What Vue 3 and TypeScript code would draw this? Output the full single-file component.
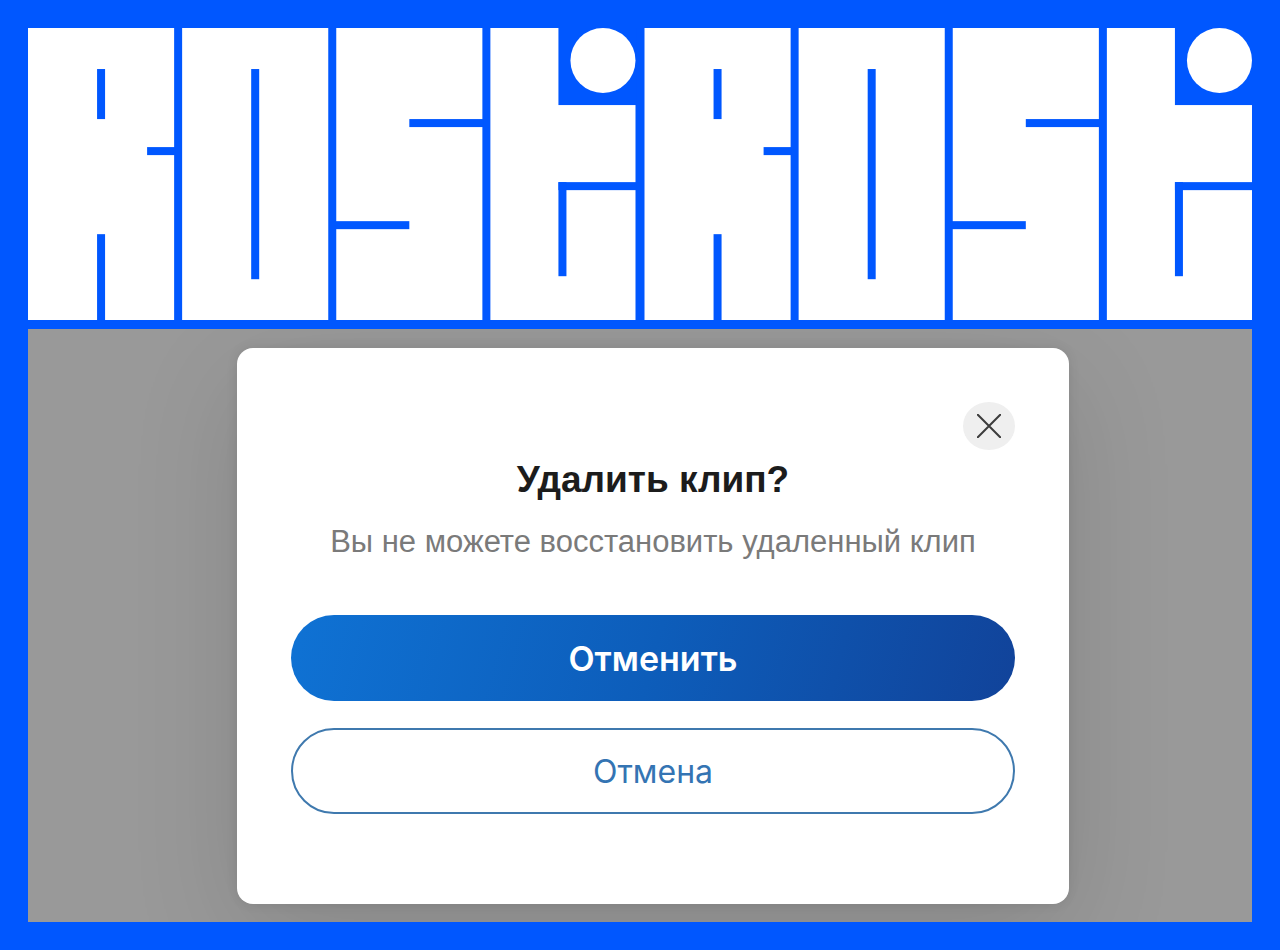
<script setup lang="ts">
import { ref } from 'vue'

interface Block {
  x: number
  y: number
  w: number
  h: number
}

const WORDMARK_STEP = 616

// White letter bodies and the blue slots cut into them
const bodies: Block[] = [
  { x: 0, y: 0, w: 146, h: 292 },
  { x: 154, y: 0, w: 146, h: 292 },
  { x: 308, y: 0, w: 146, h: 292 },
  { x: 462, y: 0, w: 145, h: 292 },
]
const slots: Block[] = [
  { x: 69, y: 41, w: 8, h: 50 },
  { x: 119, y: 119, w: 28, h: 8 },
  { x: 69, y: 206, w: 8, h: 87 },
  { x: 223, y: 41, w: 8, h: 210 },
  { x: 381, y: 91, w: 74, h: 8 },
  { x: 307, y: 193, w: 74, h: 8 },
  { x: 530, y: -1, w: 78, h: 78 },
  { x: 530, y: 154, w: 78, h: 8 },
  { x: 530, y: 154, w: 8, h: 94 },
]

const open = ref(true)
const close = () => {
  open.value = false
}
</script>

<template>
  <main class="page">
    <svg class="brand" viewBox="0 0 1223 292" role="img" aria-label="RostiRosti">
      <g v-for="n in 2" :key="n" :transform="`translate(${(n - 1) * WORDMARK_STEP} 0)`">
        <rect
          v-for="(b, i) in bodies"
          :key="`b${i}`"
          class="body"
          :x="b.x"
          :y="b.y"
          :width="b.w"
          :height="b.h"
        />
        <rect
          v-for="(s, i) in slots"
          :key="`s${i}`"
          class="slot"
          :x="s.x"
          :y="s.y"
          :width="s.w"
          :height="s.h"
        />
        <circle class="body" cx="574.5" cy="32.5" r="32.5" />
      </g>
    </svg>

    <section class="stage">
      <div v-if="open" class="dialog" role="dialog" aria-modal="true" aria-labelledby="dialog-title">
        <button class="close" type="button" aria-label="Закрыть" @click="close">
          <svg class="cross" viewBox="0 0 24 24" aria-hidden="true">
            <path d="M0.8 0.8 23.2 23.2M23.2 0.8 0.8 23.2" />
          </svg>
        </button>
        <h1 id="dialog-title" class="title">Удалить клип?</h1>
        <p class="message">Вы не можете восстановить удаленный клип</p>
        <div class="actions">
          <button class="action primary" type="button" @click="close">Отменить</button>
          <button class="action secondary" type="button" @click="close">Отмена</button>
        </div>
      </div>
    </section>
  </main>
</template>

<style>
body {
  margin: 0;
  background: #0057ff;
}
</style>

<style scoped>
.page {
  box-sizing: border-box;
  min-height: 100vh;
  padding: 28px;
  display: flex;
  flex-direction: column;
  gap: 9px;
  background: #0057ff;
  font-family: "Liberation Sans", Arial, sans-serif;
}

.brand {
  display: block;
  width: 100%;
}

.body {
  fill: #ffffff;
}

.slot {
  fill: #0057ff;
}

.stage {
  box-sizing: border-box;
  flex: 1;
  display: flex;
  justify-content: center;
  align-items: stretch;
  padding: 19px 0 18px 26px;
  background: #999999;
  overflow: hidden;
}

.dialog {
  box-sizing: border-box;
  width: 832px;
  max-width: 100%;
  padding: 54px 54px 90px;
  display: flex;
  flex-direction: column;
  border-radius: 16px;
  background: #ffffff;
  box-shadow: 0 32px 112px rgba(0, 0, 0, 0.12), 0 0 12px rgba(0, 0, 0, 0.09);
  text-align: center;
}

.close {
  align-self: flex-end;
  width: 52px;
  height: 48px;
  padding: 0;
  display: flex;
  align-items: center;
  justify-content: center;
  border: 0;
  border-radius: 50%;
  background: #efefef;
  cursor: pointer;
}

.cross {
  width: 24px;
  height: 24px;
  fill: none;
  stroke: #3c3c3c;
  stroke-width: 2;
  stroke-linecap: round;
}

.title {
  margin: 8px 0 0;
  font-size: 37px;
  line-height: 44px;
  font-weight: 700;
  color: #1c1c1c;
}

.message {
  margin: 22px 0 0;
  font-size: 31px;
  line-height: 36px;
  color: #7a7a7a;
}

.actions {
  margin-top: auto;
  display: flex;
  flex-direction: column;
  gap: 27px;
}

.action {
  box-sizing: border-box;
  width: 100%;
  height: 86px;
  padding: 2px 32px 0;
  border-radius: 44px;
  font-family: Inter, "Liberation Sans", sans-serif;
  font-size: 34px;
  line-height: 44px;
  cursor: pointer;
}

.primary {
  border: 0;
  background: linear-gradient(105deg, #0f72d4 0%, #0d5dba 50%, #11439a 100%);
  color: #ffffff;
  font-weight: 600;
}

.secondary {
  border: 2px solid #3f79ae;
  background: #ffffff;
  color: #3474b3;
  font-size: 32px;
  font-weight: 400;
}
</style>
